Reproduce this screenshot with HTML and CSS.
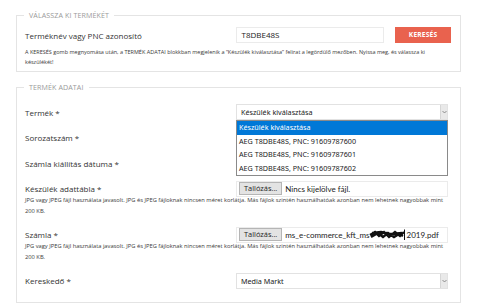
FILE: index.html
```html
<!DOCTYPE html>
<html>
	<head>
		<meta charset="utf-8">
		<link rel="stylesheet" href="styles.css">
	</head>
	<body>
		<div class="page">
			<fieldset class="box searchBox">
				<legend>Válassza ki termékét</legend>
				<div class="searchRow">
					<label>Terméknév vagy PNC azonosító</label>
					<div class="textInput searchInput">T8DBE48S</div>
					<div class="redButton">Keresés</div>
				</div>
				<div class="help">A KERESÉS gomb megnyomása után, a TERMÉK ADATAI blokkban megjelenik a “Készülék kiválasztása” felirat a legördülő mezőben. Nyissa meg, és válassza ki készülékét!</div>
			</fieldset>

			<fieldset class="box dataBox">
				<legend>Termék adatai</legend>

				<div class="field">
					<label>Termék *</label>
					<div class="selectInput">
						<span>Készülék kiválasztása</span>
						<span class="arrow"><svg width="5" height="4" viewBox="0 0 5 4"><path d="M0.5 1 L2.5 3 L4.5 1" fill="none" stroke="#777" stroke-width="0.8"/></svg></span>
						<div class="dropList">
							<div class="option selected">Készülék kiválasztása</div>
							<div class="option">AEG T8DBE48S, PNC: 91609787600</div>
							<div class="option">AEG T8DBE48S, PNC: 91609787601</div>
							<div class="option">AEG T8DBE48S, PNC: 91609787602</div>
						</div>
					</div>
				</div>

				<div class="field">
					<label>Sorozatszám *</label>
					<div class="textInput"></div>
				</div>

				<div class="field">
					<label>Számla kiállítás dátuma *</label>
					<div class="textInput"></div>
				</div>

				<div class="field withHelp">
					<label>Készülék adattábla *</label>
					<div class="fileInput">
						<span class="browse">Tallózás...</span>
						<span class="fileName">Nincs kijelölve fájl.</span>
					</div>
				</div>
				<div class="help fieldHelp">JPG vagy JPEG fájl használata javasolt. JPG és JPEG fájloknak nincsen méret korlátja. Más fájlok szintén használhatóak azonban nem lehetnek nagyobbak mint 200 KB.</div>

				<div class="field withHelp">
					<label>Számla *</label>
					<div class="fileInput">
						<span class="browse">Tallózás...</span>
						<span class="fileName">ms_e-commerce_kft_ms<svg class="scribble" width="38" height="11" viewBox="0 0 38 11"><path d="M1 6 L6 3 L10 7 L15 3 L20 8 L26 3 L31 7 L35 3 M2 8 L9 4 L14 8 L19 4 L25 8 L30 5 L34 7 M3 4 L12 3 L22 5 L33 4" fill="none" stroke="#111" stroke-width="2.4"/><path d="M35.5 0.5 L35.5 11" stroke="#111" stroke-width="1"/></svg>2019.pdf</span>
					</div>
				</div>
				<div class="help fieldHelp">JPG vagy JPEG fájl használata javasolt. JPG és JPEG fájloknak nincsen méret korlátja. Más fájlok szintén használhatóak azonban nem lehetnek nagyobbak mint 200 KB.</div>

				<div class="field lastField">
					<label>Kereskedő *</label>
					<div class="selectInput">
						<span>Media Markt</span>
						<span class="arrow"><svg width="5" height="4" viewBox="0 0 5 4"><path d="M0.5 1 L2.5 3 L4.5 1" fill="none" stroke="#777" stroke-width="0.8"/></svg></span>
					</div>
				</div>
			</fieldset>
		</div>
	</body>
</html>
```

FILE: styles.css
```css
body {
	margin: 0;
	background-color: #ffffff;
	color: #333333;
	font-family: "Open Sans", "Noto Sans", sans-serif;
	font-size: 8px;
	overflow: hidden;
}

.page {
	padding-top: 10px;
}

.box {
	box-sizing: border-box;
	width: 445px;
	margin: 0 0 0 16px;
	border: 1px solid #e4e4e4;
	padding: 7px 9px 4px 8px;
	min-width: 0;
}
.box legend {
	margin-left: -1px;
	padding: 0 5px;
	height: 10px;
	line-height: 10px;
	font-size: 7.1px;
	color: #9a9a9a;
	text-transform: uppercase;
	letter-spacing: 0.1px;
}

.dataBox {
	margin-top: 10px;
	padding: 12px 13px 13px 8px;
}

.searchRow {
	display: flex;
	align-items: center;
	height: 16px;
}
.searchRow label {
	width: 212px;
}
.searchInput {
	width: 148px;
}

.textInput {
	box-sizing: border-box;
	height: 16px;
	line-height: 14px;
	padding-left: 4px;
	border: 1px solid #ebebeb;
	background-color: #ffffff;
	color: #222222;
}

.redButton {
	box-sizing: border-box;
	width: 56px;
	height: 16px;
	margin-left: 11px;
	line-height: 16px;
	background-color: #e9624e;
	color: #ffffff;
	font-weight: bold;
	font-size: 6.6px;
	text-align: center;
	text-transform: uppercase;
	letter-spacing: 0.2px;
}

.help {
	margin-top: 4px;
	font-size: 5.5px;
	line-height: 10px;
	color: #3a3a3a;
}
.fieldHelp {
	width: 428px;
	margin-top: -2px;
	line-height: 11px;
	margin-bottom: 10px;
	font-size: 5.75px;
}

.field {
	display: grid;
	grid-template-columns: 211px 212px;
	align-items: center;
	height: 16px;
	margin-bottom: 9.5px;
}
.field label {
	font-size: 8px;
}
.field.withHelp,
.field.lastField {
	margin-bottom: 0;
}

.selectInput {
	position: relative;
	box-sizing: border-box;
	height: 16px;
	line-height: 14px;
	padding-left: 4px;
	border: 1px solid #e2e2e2;
	color: #222222;
	font-family: "Noto Sans", "DejaVu Sans", sans-serif;
	font-size: 7.2px;
}
.selectInput .arrow {
	position: absolute;
	right: 0;
	top: 0;
	width: 6px;
	height: 14px;
	background-color: #e9e9e9;
	border-left: 1px solid #d6d6d6;
	display: flex;
	align-items: center;
	justify-content: center;
}

.dropList {
	position: absolute;
	left: -1px;
	top: 15px;
	width: 212px;
	box-sizing: border-box;
	border: 1px solid #8a8a8a;
	background-color: #ffffff;
	z-index: 2;
}
.option {
	height: 13.5px;
	line-height: 13.5px;
	padding-left: 2px;
	color: #1a1a1a;
	font-family: "Noto Sans", "DejaVu Sans", sans-serif;
	font-size: 7.2px;
}
.option.selected {
	background-color: #0078d7;
	color: #ffffff;
}

.fileInput {
	box-sizing: border-box;
	height: 16px;
	display: flex;
	align-items: center;
	padding-left: 2px;
	border: 1px solid #ebebeb;
	white-space: nowrap;
}
.browse {
	box-sizing: border-box;
	height: 13px;
	line-height: 11px;
	padding: 0 4px;
	border: 1px solid #b5b5b5;
	background-color: #e3e3e3;
	color: #222222;
	font-size: 7.4px;
}
.fileName {
	margin-left: 3px;
	font-family: "Lato", "Open Sans", sans-serif;
	font-size: 8px;
	color: #222222;
	display: flex;
	align-items: center;
	white-space: nowrap;
}
.scribble {
	margin-left: -1px;
}
```
